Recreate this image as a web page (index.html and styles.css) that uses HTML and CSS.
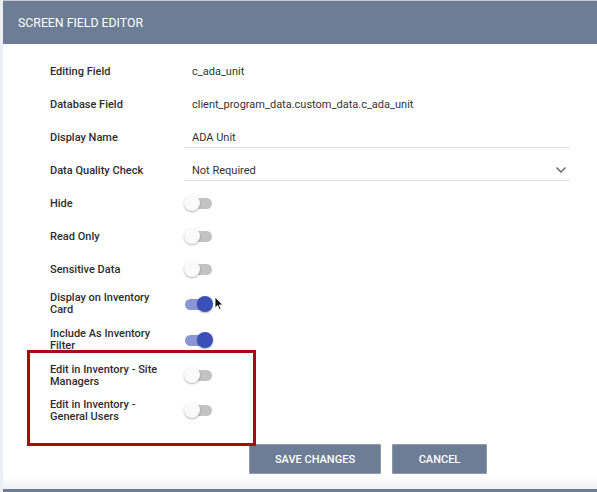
FILE: index.html
```html
<!DOCTYPE html>
<html>
<head>
<meta charset="utf-8">
<link rel="stylesheet" href="styles.css">
</head>
<body>
<div class="page">
  <div class="header">SCREEN FIELD EDITOR</div>
  <div class="content">
    <div class="row"><div class="label">Editing Field</div><div class="value">c_ada_unit</div></div>
    <div class="row"><div class="label">Database Field</div><div class="value">client_program_data.custom_data.c_ada_unit</div></div>
    <div class="row"><div class="label">Display Name</div><div class="value input">ADA Unit</div></div>
    <div class="row"><div class="label">Data Quality Check</div><div class="value input select">Not Required
      <svg class="chev" width="12" height="8" viewBox="0 0 12 8"><path d="M1.5 1.5 L6 6 L10.5 1.5" fill="none" stroke="#666" stroke-width="1.4"/></svg></div></div>
    <div class="row"><div class="label">Hide</div><div class="ctrl"><span class="toggle"></span></div></div>
    <div class="row"><div class="label">Read Only</div><div class="ctrl"><span class="toggle"></span></div></div>
    <div class="row"><div class="label">Sensitive Data</div><div class="ctrl"><span class="toggle"></span></div></div>
    <div class="row tall"><div class="label">Display on Inventory<br>Card</div><div class="ctrl cursor-host"><span class="toggle on"></span>
      <svg class="cursor" width="10" height="15" viewBox="0 0 10 15"><path d="M1 1 L1 12 L3.6 9.6 L5.4 13.8 L7 13.1 L5.3 9 L8.8 9 Z" fill="#111" stroke="#fff" stroke-width="0.9"/></svg></div></div>
    <div class="row tall"><div class="label">Include As Inventory<br>Filter</div><div class="ctrl"><span class="toggle on"></span></div></div>
    <div class="highlight">
      <div class="row tall2"><div class="label">Edit in Inventory - Site<br>Managers</div><div class="ctrl"><span class="toggle"></span></div></div>
      <div class="row tall2"><div class="label">Edit in Inventory -<br>General Users</div><div class="ctrl"><span class="toggle"></span></div></div>
    </div>
    <div class="actions">
      <button class="btn save">SAVE CHANGES</button>
      <button class="btn cancel">CANCEL</button>
    </div>
  </div>
  <div class="footer"></div>
</div>
</body>
</html>
```
FILE: styles.css
```css
* { box-sizing: border-box; }
html, body { margin: 0; padding: 0; background: #fff; }
body { font-family: Roboto, "Noto Sans", Arial, sans-serif; color: #303030; }
.page { width: 597px; height: 492px; display: flex; flex-direction: column; border-left: 3px solid #eceef3; overflow: hidden; }
.header {
  height: 44px;
  border-top: 1px solid #c5ccd8;
  background: #6e7d96;
  color: #fff;
  font-size: 12.3px;
  display: flex;
  align-items: center;
  margin-left: -3px;
  padding-left: 18px;
}
.content { flex: 1; padding-top: 11px; padding-left: 47px; }
.row { display: flex; align-items: center; height: 33px; }
.row.tall { height: 36px; }
.row.tall2 { height: 35px; }
.label { width: 134px; font-size: 11px; font-weight: 500; line-height: 12px; color: #2e2e2e; }
.value { font-size: 11px; padding-left: 8px; color: #333; }
.input { width: 386px; height: 21px; display: flex; align-items: center; border-bottom: 1px solid #dedede; }
.select { position: relative; }
.chev { position: absolute; right: 3px; top: 6px; }
.ctrl { display: flex; align-items: center; padding-left: 1px; }
.cursor-host { position: relative; }
.cursor { position: absolute; left: 30px; top: -3px; }
.toggle { position: relative; display: block; width: 27px; height: 11px; border-radius: 6px; background: #c2c2c2; }
.toggle::after {
  content: ""; position: absolute; left: -1px; top: -3px; width: 16px; height: 16px; border-radius: 50%;
  background: #fafafa; box-shadow: 0 1px 2px rgba(0,0,0,0.3);
}
.toggle.on { background: #8b97d5; }
.toggle.on::after { left: 12px; background: #3c4fb8; }
.highlight { position: relative; }
.highlight::before {
  content: ""; position: absolute; left: -23px; top: -8px; width: 223px; height: 90px;
  border: 3px solid #a60d10; pointer-events: none;
}
.actions { display: flex; gap: 11px; padding-left: 199px; margin-top: 16px; }
.btn {
  height: 30px; border: 1px solid #8d98ab; background: #6e7d96; color: #fff;
  font-family: Roboto, Arial, sans-serif; font-size: 11px; font-weight: 500; padding: 0; border-radius: 1px;
}
.save { width: 132px; }
.cancel { width: 95px; }
.footer { margin-left: -3px; margin-top: auto; height: 16px; background: linear-gradient(#fff 0, #f1f1f3 13px, #6e7d96 13px, #6e7d96 100%); }
```
